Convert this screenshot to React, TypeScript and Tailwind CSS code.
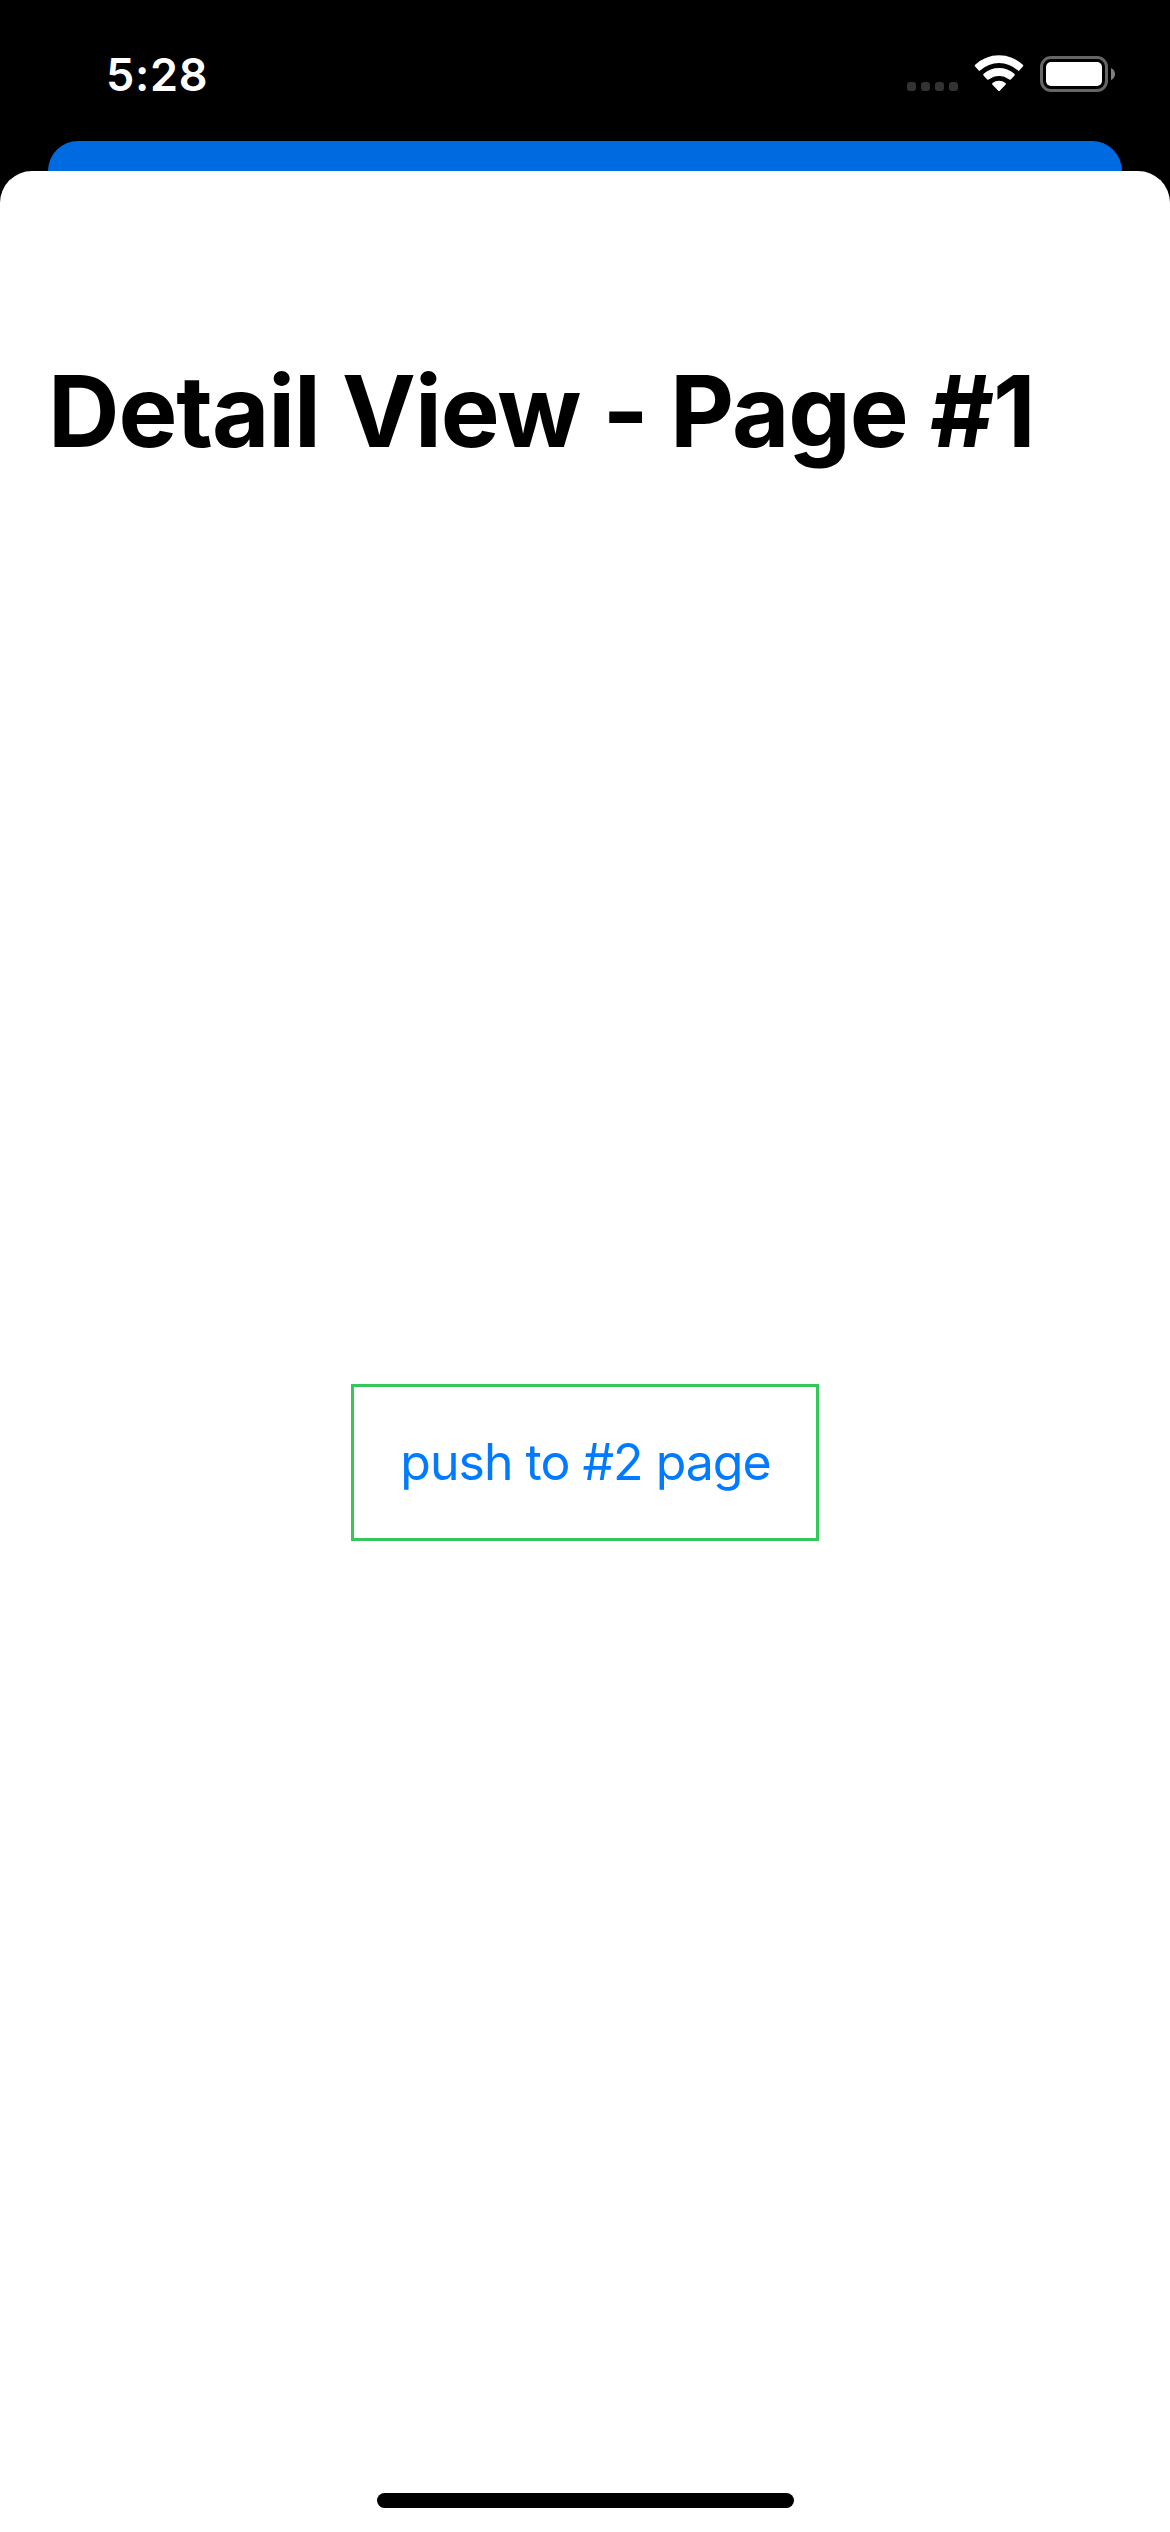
function SignalDots() {
  return (
    <div className="mb-px flex gap-[5px] self-end">
      <span className="size-[9px] rounded-[3px] bg-[#333333]" />
      <span className="size-[9px] rounded-[3px] bg-[#333333]" />
      <span className="size-[9px] rounded-[3px] bg-[#333333]" />
      <span className="size-[9px] rounded-[3px] bg-[#333333]" />
    </div>
  );
}

function WifiIcon() {
  return (
    <svg className="ml-4 h-[37px] w-[50px]" viewBox="282 75 150 111" fill="#fff" aria-hidden="true">
      <path d="M285.5 104.5A104 104 0 0 1 428.500 104.500Q431 107 428.500 109.500L418.500 120.500Q416 123.500 413 120.500A84 84 0 0 0 301 120.500Q298 123.500 295.500 120.500L285.500 109.500Q283 107 285.500 104.500Z" />
      <path d="M311 131A70 70 0 0 1 403 131Q406 134 403 137L393 147.500Q390 151 386.500 148A48 48 0 0 0 327.500 148Q324 151 321 147.500L311 137Q308 134 311 131Z" />
      <path d="M337.500 159A32 32 0 0 1 376.500 159Q379 161.500 376.500 164.500L360 181.500Q357 184.500 354 181.500L337.500 164.500Q335 161.500 337.500 159Z" />
    </svg>
  );
}

function BatteryIcon() {
  return (
    <div className="mt-px ml-4 flex items-center">
      <div className="h-9 w-[68px] rounded-[11px] border-3 border-[#666666] p-[3px]">
        <div className="h-full rounded-[5px] bg-white" />
      </div>
      <svg className="ml-[3px] h-3 w-1" viewBox="0 0 4 12" aria-hidden="true">
        <path d="M0 0Q4 2 4 6T0 12Z" fill="#808080" />
      </svg>
    </div>
  );
}

export default function App() {
  return (
    <div className="flex h-[2532px] w-[1170px] flex-col overflow-hidden bg-black font-['Inter',sans-serif]">
      <header className="flex h-[141px] shrink-0 items-start justify-between pr-[55px] pl-[106px]">
        <time className="mt-[47px] text-[45px] leading-[56px] font-[560] tracking-[0.7px] text-white">5:28</time>
        <div className="mt-[55px] flex h-[37px] items-center">
          <SignalDots />
          <WifiIcon />
          <BatteryIcon />
        </div>
      </header>
      <div className="mx-12 h-[30px] shrink-0 overflow-hidden">
        <div className="h-[60px] rounded-t-[30px] bg-[#006ae0]" />
      </div>
      <main className="flex grow flex-col items-center rounded-t-[32px] bg-white">
        <h1 className="mt-[178px] h-[124px] self-start pl-12 text-[99px] leading-[124px] font-bold tracking-[-1.1px] whitespace-nowrap text-black">
          Detail View - Page #1
        </h1>
        <button className="mt-[911px] flex h-[157px] w-[468px] items-center justify-center border-3 border-[#34c759] pl-px text-[50px] leading-[61px] tracking-[-1px] whitespace-nowrap text-[#007aff]">
          push to #2 page
        </button>
        <div className="mt-auto mb-6 h-[15px] w-[417px] rounded-full bg-black" />
      </main>
    </div>
  );
}
